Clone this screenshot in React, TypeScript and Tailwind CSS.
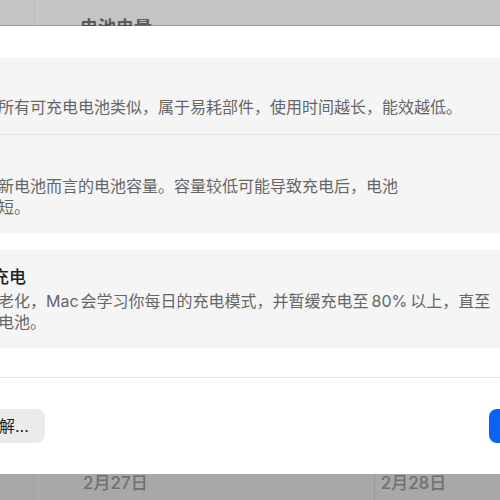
import React from "react";

const rows = [
  {
    title: "电池状况",
    lines: ["你的电池与所有可充电电池类似，属于易耗部件，使用时间越长，能效越低。"],
    pad: "pt-[14px] pb-[16px]",
  },
  {
    title: "最大容量",
    lines: ["这是相对于新电池而言的电池容量。容量较低可能导致充电后，电池", "使用时间缩短。"],
    pad: "pt-[16px] pb-[15px]",
  },
];

export default function App() {
  return (
    <div className="w-[500px] h-[500px] overflow-hidden flex flex-col bg-white font-['Inter','Noto_Sans_CJK_SC',sans-serif]">
      {/* window behind the sheet */}
      <div className="h-[26px] shrink-0 bg-[#c4c4c4] flex overflow-hidden">
        <div className="ml-[37px] w-px bg-[#cdcdcd]" />
        <div className="ml-[42px] pt-[19px] text-[18px] leading-[18px] font-semibold text-[#5a5a5a] whitespace-nowrap">
          电池电量
        </div>
      </div>

      {/* sheet */}
      <div className="flex-1 flex flex-col bg-white shadow-[0_-1px_0_rgba(0,0,0,0.18)] relative">
        <div className="-ml-[100px] -mr-[40px] pt-[32px] flex flex-col">
          <div className="rounded-[10px] bg-[#f5f5f5] flex flex-col">
            {rows.map((r, i) => (
              <div key={r.title} className={`flex flex-col pl-[18px] ${r.pad} ${i > 0 ? "border-t border-[#e4e4e4]" : ""}`}>
                <div className="text-[17px] leading-[22px] font-medium text-[#1f1f1f] whitespace-nowrap">{r.title}</div>
                <div className="mt-[3px] text-[16px] leading-[21px] text-[#666666] whitespace-nowrap">
                  {r.lines.map((l) => (
                    <div key={l}>{l}</div>
                  ))}
                </div>
              </div>
            ))}
          </div>

          <div className="mt-[17px] rounded-[10px] bg-[#f5f5f5] flex flex-col pl-[18px] pt-[16px] pb-[15px]">
            <div className="ml-[6px] text-[17px] leading-[22px] font-medium text-[#1f1f1f] whitespace-nowrap">优化电池充电</div>
            <div className="mt-[3px] text-[16px] leading-[21px] text-[#666666] whitespace-nowrap">
              <div>
                为减缓电池老化，<span className="mr-[2px]">Mac</span>会学习你每日的充电模式，并暂缓充电至
                <span className="mx-[3px]">80%</span>以上，直至
              </div>
              <div>你需要使用电池。</div>
            </div>
          </div>
        </div>

        <div className="mt-[29px] h-px bg-[#e6e6e6]" />

        <div className="mt-[31px] flex items-center">
          <button className="-ml-[33px] h-[34px] px-[16px] rounded-[8px] bg-[#ebebeb] text-[16px] leading-[34px] text-[#1f1f1f] whitespace-nowrap">
            了解...
          </button>
          <div className="flex-1" />
          <button className="-mr-[65px] w-[76px] h-[34px] rounded-[8px] bg-[#0b63f5] text-[16px] text-white">完成</button>
        </div>
      </div>

      {/* window behind, bottom strip */}
      <div className="h-[26px] shrink-0 bg-[#a8a8a8] flex overflow-hidden">
        <div className="ml-[38px] w-px bg-[#b2b2b2]" />
        <div className="ml-[44px] pt-[1px] text-[17px] leading-[17px] font-medium text-[#707070] whitespace-nowrap">2月27日</div>
        <div className="ml-[226px] w-px bg-[#999999]" />
        <div className="ml-[6px] pt-[1px] text-[17px] leading-[17px] font-medium text-[#707070] whitespace-nowrap">2月28日</div>
      </div>
    </div>
  );
}
